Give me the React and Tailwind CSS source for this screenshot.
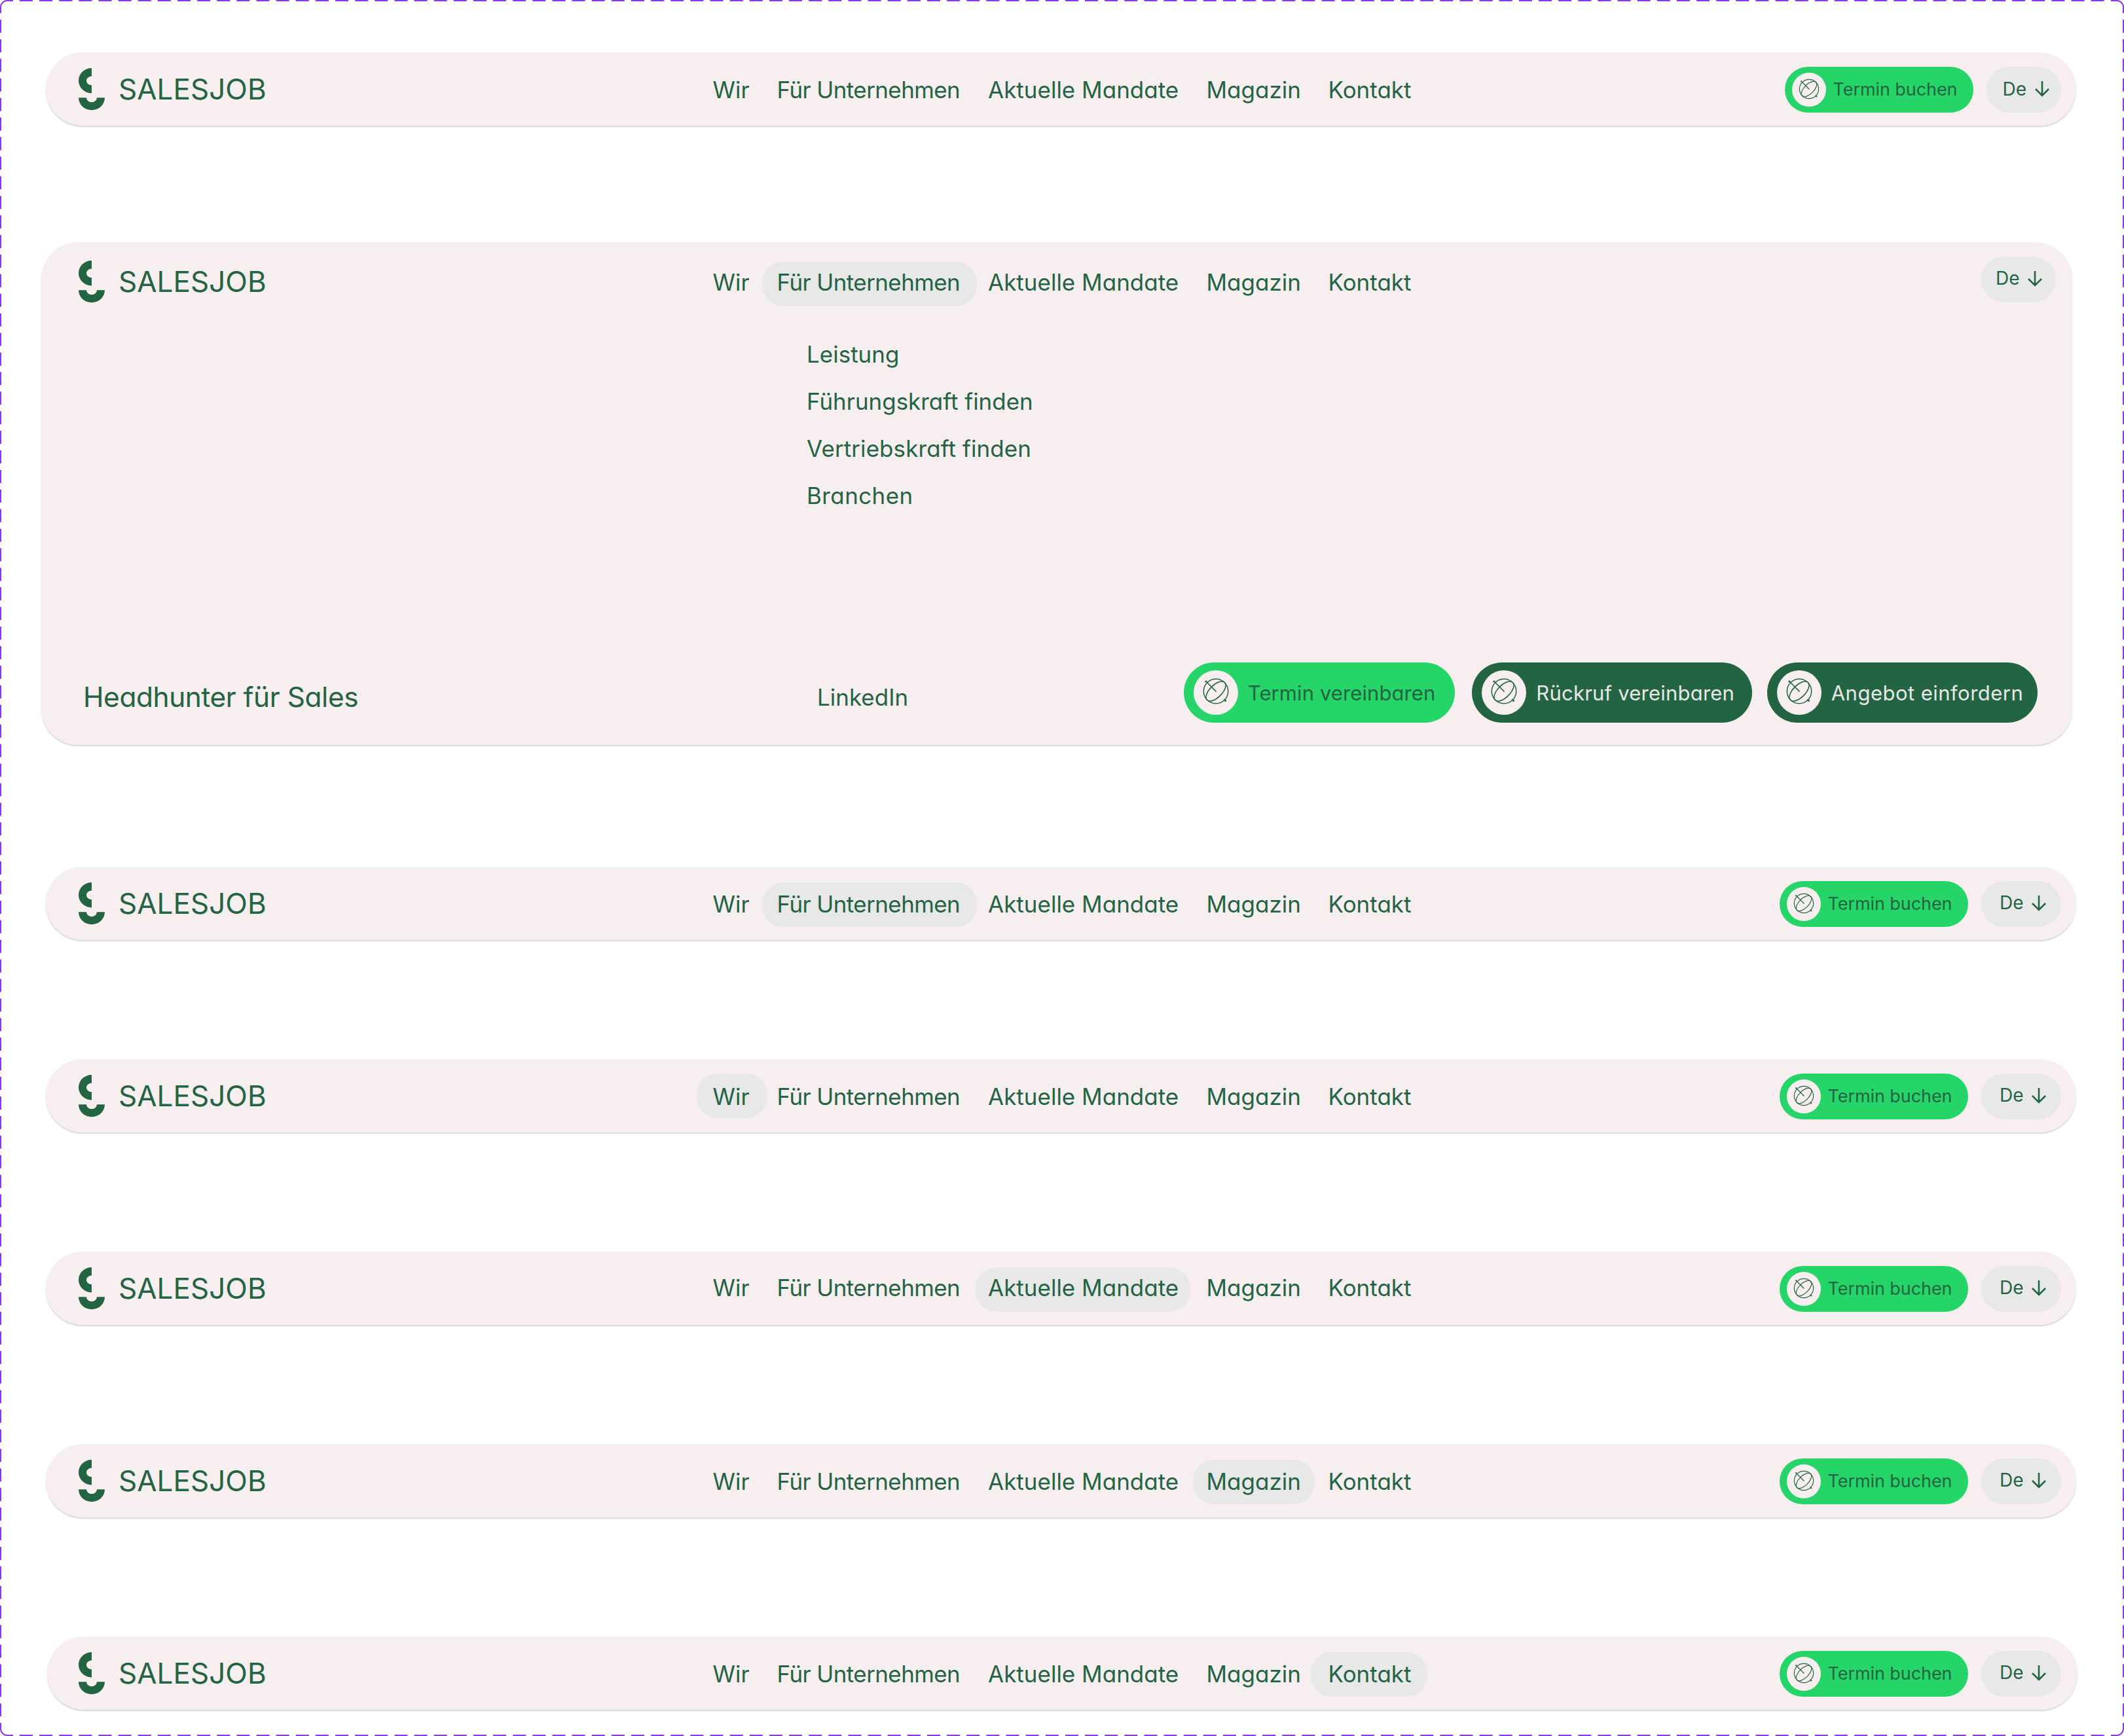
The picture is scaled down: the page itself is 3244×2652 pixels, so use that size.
import React from 'react';

const navItems = [
  { label: 'Wir', cell: 'w-[98px]', pill: '-left-[24.5px] w-[108px]' },
  { label: 'Für Unternehmen', cell: 'w-[322.5px] tracking-[-0.6px]', pill: '-left-[22.5px] w-[328px]' },
  { label: 'Aktuelle Mandate', cell: 'w-[333.5px]', pill: '-left-[19px] w-[328px]' },
  { label: 'Magazin', cell: 'w-[186px]', pill: '-left-[20.5px] w-[186px]' },
  { label: 'Kontakt', cell: 'w-[130px]', pill: '-left-[26.5px] w-[178px]' },
];

const subItems = [
  { label: 'Leistung', spacing: 'tracking-[0px]' },
  { label: 'Führungskraft finden', spacing: 'tracking-[-0.03px]' },
  { label: 'Vertriebskraft finden', spacing: 'tracking-[0.08px]' },
  { label: 'Branchen', spacing: 'tracking-[0.4px]' },
];

// Dashed frame around the whole variant set
function DashedFrame() {
  return (
    <svg className="absolute inset-0 pointer-events-none" width="3244" height="2652" fill="none" stroke="#8a38f5" strokeWidth="2">
      <path d="M30 1H3214" strokeDasharray="20 10.13" />
      <path d="M30 2651H3214" strokeDasharray="20 10.13" />
      <path d="M1 30V2622" strokeDasharray="20 9.909" />
      <path d="M3243 30V2622" strokeDasharray="20 9.909" />
      <path d="M1 20V11A10 10 0 0 1 11 1H20" />
      <path d="M3224 1H3233A10 10 0 0 1 3243 11V20" />
      <path d="M3243 2632V2641A10 10 0 0 1 3233 2651H3224" />
      <path d="M20 2651H11A10 10 0 0 1 1 2641V2632" />
    </svg>
  );
}

function Logo() {
  return (
    <div className="flex w-[968.5px] shrink-0 items-start">
      <svg className="mt-[23.5px] shrink-0" width="40" height="65" viewBox="0 0 40 65" fill="#236443">
        <path d="M20 0V12.5A8 6.9 0 0 0 20 26.3V38.4A20 19.2 0 0 1 20 0Z" />
        <path d="M0 45.3H12A8 6.9 0 0 0 28 45.3H40A20 19 0 0 1 0 45.3Z" />
      </svg>
      <span className="ml-[21px] mt-[33.7px] text-[44px] leading-[44px]">SALESJOB</span>
    </div>
  );
}

function BallIcon({ className }) {
  return (
    <svg className={className} viewBox="-23 -23 46 46" fill="none" stroke="#236443" strokeWidth="1.5">
      <circle r="18.7" />
      <ellipse rx="19" ry="9.4" transform="rotate(-45)" />
      <path d="M-16 -16L0.6 0.6M-16.4 -13.8L-14 -16.2M12.4 12.4L15.6 15.6M13.4 15.4L15.6 13.4" />
    </svg>
  );
}

function Nav({ active, textTop, pillTop }) {
  return (
    <nav className={`flex items-start text-[35px] leading-[36px] ${textTop}`}>
      {navItems.map((item) => (
        <a key={item.label} className={`relative shrink-0 whitespace-nowrap ${item.cell}`}>
          {active === item.label && (
            <span className={`absolute h-[68px] rounded-[32px] bg-[#e8e8e8] ${item.pill} ${pillTop}`} />
          )}
          <span className="relative">{item.label}</span>
        </a>
      ))}
    </nav>
  );
}

function BookButton() {
  return (
    <button className="flex h-[70px] w-[288px] items-start rounded-[35px] bg-[#26d568]">
      <span className="ml-[11px] mt-[9px] flex size-[52px] shrink-0 justify-center rounded-full bg-[#f7eeef]">
        <BallIcon className="mt-[7px] size-9" />
      </span>
      <span className="ml-[10.5px] mt-[21px] whitespace-nowrap text-[27px] leading-[28px] tracking-[-0.08px]">
        Termin buchen
      </span>
    </button>
  );
}

function LangSwitch({ className, textTop }) {
  return (
    <button className={`flex h-[70px] items-start rounded-[35px] bg-[#e8e8e8] ${className}`}>
      <span className={`w-[49px] text-left text-[28px] leading-[28px] ${textTop}`}>De</span>
      <svg className="mt-[22px]" width="22" height="24" viewBox="0 0 22 24" fill="none" stroke="#236443" strokeWidth="2.6">
        <path d="M11 0V22M1 12L11 22L21 12" />
      </svg>
    </button>
  );
}

function Bar({ active, className, textTop = 'mt-[39.3px]', pillTop = '-top-[15.3px]', first }) {
  return (
    <header className={`flex h-[112px] w-[3100.5px] items-start rounded-[56px] bg-[#f7eeef] shadow-[0_2px_2px_rgba(0,0,0,0.16)] ${className}`}>
      <Logo />
      <Nav active={active} textTop={textTop} pillTop={pillTop} />
      <div className="ml-auto mt-[22px] flex gap-5">
        <BookButton />
        {first ? (
          <LangSwitch className="w-[114px] pl-[24.5px]" textTop="mt-5" />
        ) : (
          <LangSwitch className="w-[122px] pl-7" textTop="mt-[18.5px]" />
        )}
      </div>
    </header>
  );
}

function CtaButton({ className, textClass, children }) {
  return (
    <button className={`flex h-[92px] items-start rounded-[46px] ${className}`}>
      <span className="ml-[15px] mt-3 flex size-[68px] shrink-0 justify-center rounded-full bg-[#f7eeef]">
        <BallIcon className="mt-[9px] size-[46px]" />
      </span>
      <span className={`mt-[30.7px] whitespace-nowrap text-[31px] leading-8 ${textClass}`}>{children}</span>
    </button>
  );
}

function OpenPanel() {
  return (
    <section className="ml-[63px] mt-[178px] h-[768px] w-[3101.5px] shrink-0 rounded-[56px] bg-[#f7eeef] pl-[57px] pr-[24.5px] shadow-[0_2px_2px_rgba(0,0,0,0.16)]">
      <div className="flex h-[112px] items-start">
        <div className="mt-1">
          <Logo />
        </div>
        <Nav active="Für Unternehmen" textTop="mt-[43.3px]" pillTop="-top-[13.3px]" />
        <div className="ml-auto mt-[22px]">
          <LangSwitch className="w-[114px] pl-[22px]" textTop="mt-[18.5px]" />
        </div>
      </div>

      <ul className="ml-[1112px] mt-[23.3px] text-[35px] leading-[72px]">
        {subItems.map((item) => (
          <li key={item.label} className={item.spacing}>{item.label}</li>
        ))}
      </ul>

      <div className="mt-[218.7px] flex items-start">
        <p className="ml-[7px] mt-[31px] w-[1121px] text-[42.5px] leading-[44px] tracking-[-0.47px]">Headhunter für Sales</p>
        <a className="mt-[35.3px] w-[560.3px] text-[35px] leading-[36px]">LinkedIn</a>
        <CtaButton className="w-[413.7px] bg-[#26d568]" textClass="ml-[14.4px] tracking-[0.1px]">
          Termin vereinbaren
        </CtaButton>
        <CtaButton className="ml-[26.3px] w-[427.7px] bg-[#236443] text-[#e8e8e8]" textClass="ml-[15px] tracking-[0.22px]">
          Rückruf vereinbaren
        </CtaButton>
        <CtaButton className="ml-[22.8px] w-[413.6px] bg-[#236443] text-[#e8e8e8]" textClass="ml-[15px] tracking-[0.47px]">
          Angebot einfordern
        </CtaButton>
      </div>
    </section>
  );
}

export default function App() {
  return (
    <div className="relative flex h-[2652px] w-[3244px] flex-col bg-white font-['Inter',sans-serif] text-[#236443] [font-feature-settings:'cv11']">
      <DashedFrame />
      <Bar first className="ml-[70px] mt-20 pl-[50px] pr-[22.5px]" />
      <OpenPanel />
      <Bar active="Für Unternehmen" className="ml-[70px] mt-[186px] pl-[50px] pr-[22.5px]" />
      <Bar active="Wir" pillTop="-top-[17.3px]" className="ml-[70px] mt-[182px] pl-[50px] pr-[22.5px]" />
      <Bar active="Aktuelle Mandate" textTop="mt-[37.3px]" pillTop="-top-[13.3px]" className="ml-[70px] mt-[182px] pl-[50px] pr-[22.5px]" />
      <Bar active="Magazin" className="ml-[70px] mt-[182px] pl-[50px] pr-[22.5px]" />
      <Bar active="Kontakt" className="ml-[72px] mt-[182px] pl-[48px] pr-[24.5px]" />
    </div>
  );
}
